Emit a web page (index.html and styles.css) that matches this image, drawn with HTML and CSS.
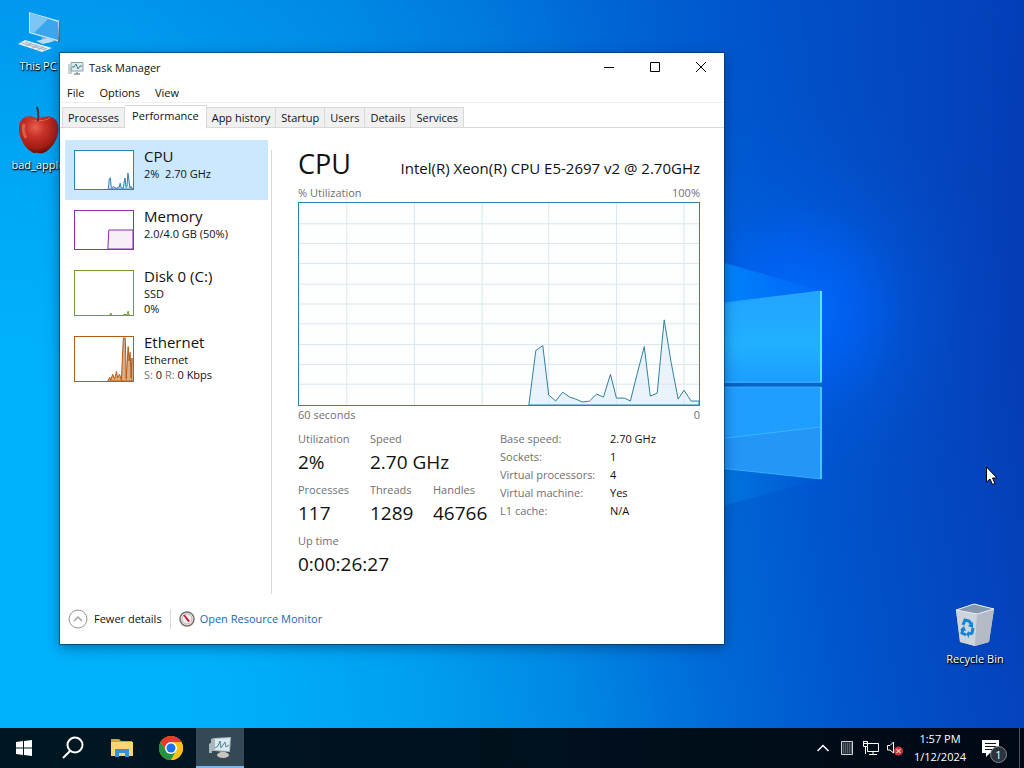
FILE: index.html
```html
<!DOCTYPE html>
<html lang="en">
<head>
<meta charset="utf-8">
<title>Task Manager</title>
<link rel="stylesheet" href="styles.css">
</head>
<body>
<div class="screen">
<main class="desktop">
  <svg class="wallpaper-logo" viewBox="0 0 300 300" aria-hidden="true">
    <defs>
      <linearGradient id="pane" x1="0" y1="0" x2="0" y2="1"><stop offset="0" stop-color="#22a4ff"/><stop offset=".6" stop-color="#20b0ff"/><stop offset="1" stop-color="#1c9cff"/></linearGradient>
      <linearGradient id="ray" x1="0" y1="0" x2="1" y2="0"><stop offset="0" stop-color="#0098ff" stop-opacity=".9"/><stop offset="1" stop-color="#0070ff" stop-opacity=".3"/></linearGradient>
      <linearGradient id="dim" x1="0" y1="0" x2="1" y2="0"><stop offset="0" stop-color="#0088e8" stop-opacity=".7"/><stop offset="1" stop-color="#0068e0" stop-opacity=".1"/></linearGradient>
    </defs>
    <path d="M0 16L122 51L0 68z" fill="url(#ray)"/>
    <path d="M0 226L122 239L0 272z" fill="url(#dim)"/>
    <path d="M0 67L122 51V143H0z" fill="url(#pane)"/>
    <path d="M0 147H122V239L0 226z" fill="#209eff"/>
    <path d="M0 201L122 187V239L0 226z" fill="#2396f7"/>
    <path d="M0 143H122V147H0z" fill="#0764c8"/>
    <path d="M0 66L121 51M0 142H121M0 147H121M0 226L121 239M0 201L121 187" fill="none" stroke="#4ac4ff" stroke-opacity=".6"/>
    <path d="M121 51V142" stroke="#55e5ff" stroke-width="2"/>
    <path d="M121 147V239" stroke="#49c5ff" stroke-width="2"/>
  </svg>

  <button class="shortcut shortcut-pc">
    <svg width="48" height="48" viewBox="0 0 48 48" aria-hidden="true">
      <path d="M15 3L46 12V33L15 24z" fill="#c8e8fa"/><path d="M16 4L44 13V31L16 23z" fill="#3ba6ed"/><path d="M16 4L34 10L20 24L16 23z" fill="#7cc6f5"/><path d="M45 12L46 12V33L44 33z" fill="#4c6c80"/>
      <path d="M28 28L36 30V34L28 32z" fill="#8fb2c6"/><path d="M22 32L34 29L41 32L29 35z" fill="#b9dcec"/>
      <path d="M4 35L11 31L38 39L28 43z" fill="#e6eef3"/><path d="M8 34L31 41M11 33L33 40M11 38L18 34M17 40L24 36M23 41L30 38" stroke="#9db2c0"/>
    </svg>
    <span>This PC</span>
  </button>
  <button class="shortcut shortcut-apple">
    <svg width="48" height="52" viewBox="0 0 48 52" aria-hidden="true">
      <defs><radialGradient id="apple" cx=".42" cy=".3" r=".7"><stop offset="0" stop-color="#e86050"/><stop offset=".35" stop-color="#c93228"/><stop offset=".8" stop-color="#a31c15"/><stop offset="1" stop-color="#650c08"/></radialGradient></defs>
      <path d="M24 15C17 10 6 11 5 23C4 34 12 45 18 48C20 50 22 48 24 49C27 50 30 49 33 47C40 42 46 31 44 21C42 11 31 11 24 15z" fill="url(#apple)"/>
      <path d="M10 13Q24 20 38 13Q26 21 10 13z" fill="#e98a68"/>
      <path d="M24 17Q25 9 23 3" fill="none" stroke="#503526" stroke-width="2"/>
      <path d="M10 20Q8 27 12 34" fill="none" stroke="#f0907c" stroke-opacity=".5" stroke-width="3"/>
    </svg>
    <span>bad_apple</span>
  </button>
  <button class="shortcut shortcut-bin">
    <svg width="48" height="48" viewBox="0 0 48 48" aria-hidden="true">
      <path d="M5 8L23 2L43 7L38 40L24 44L9 40z" fill="#c1cad3"/>
      <path d="M5 8L23 2L43 7L26 12z" fill="#8599ae"/>
      <path d="M5 8L26 12L24 44L9 40z" fill="#cdd4db"/><path d="M26 12L43 7L38 40L24 44z" fill="#b4bbc6"/>
      <path d="M5 8L26 12L43 7M5 8L23 2L43 7" fill="none" stroke="#e4ecf2"/>
      <path d="M12 23L14 18L18 19L20 22M22 26L21 31L18 32M15 33L11 31L12 27" fill="none" stroke="#1583d5" stroke-width="3"/>
      <path d="M17 24L22 20V26zM18 29L15 32L18 36zM9 28L13 24L15 29z" fill="#1583d5"/>
    </svg>
    <span>Recycle Bin</span>
  </button>

  <section class="window" aria-label="Task Manager">
    <header class="titlebar">
      <svg width="16" height="16" viewBox="0 0 16 16" aria-hidden="true"><path d="M3 2.500H15V11H3z" fill="#dcebed" stroke="#8aa2a6"/><path d="M4 7H6L8 4L10 9L12 6H14" fill="none" stroke="#427c83"/><path d="M1 4V14M3 7V14" stroke="#97a5a8"/><path d="M9 12V14M6 14H12" stroke="#8b999c" stroke-width="1.500"/></svg>
      <h1 class="title">Task Manager</h1>
      <div class="caption-buttons">
        <button aria-label="Minimize"><svg width="12" height="12" viewBox="0 0 12 12"><path d="M1 5.500H11"/></svg></button>
        <button aria-label="Maximize"><svg width="12" height="12" viewBox="0 0 12 12"><path d="M1.500 .5H10.500V9.500H1.500z"/></svg></button>
        <button aria-label="Close"><svg width="12" height="12" viewBox="0 0 12 12"><path d="M1 0L11 10M11 0L1 10"/></svg></button>
      </div>
    </header>
    <nav class="menubar" aria-label="Menu"><button>File</button><button>Options</button><button>View</button></nav>
    <div class="tabs" role="tablist">
      <button role="tab">Processes</button><button role="tab" class="selected" aria-selected="true">Performance</button><button role="tab">App history</button><button role="tab">Startup</button><button role="tab">Users</button><button role="tab">Details</button><button role="tab">Services</button>
    </div>
    <div class="content">
      <div class="resources">
        <button class="resource active">
          <svg class="thumb cpu" viewBox="0 0 402 204" preserveAspectRatio="none"><path d="M231 203L238 149L245 144L251 194L258 200L265 191L285 201L299 193L306 196L313 173L319 197L333 200L347 145L353 195L360 192L367 118L381 198L387 189L394 200L402 200V204H231z"/></svg>
          <span class="resource-text"><strong>CPU</strong><span>2%&nbsp; 2.70 GHz</span></span>
        </button>
        <button class="resource">
          <svg class="thumb memory" viewBox="0 0 60 40" preserveAspectRatio="none"><path d="M34 40L35 20H60V40z"/></svg>
          <span class="resource-text"><strong>Memory</strong><span>2.0/4.0 GB (50%)</span></span>
        </button>
        <button class="resource">
          <svg class="thumb disk tall" viewBox="0 0 60 46" preserveAspectRatio="none"><path d="M36 46L37 44L38 46zM50 46L52 45L53 46L54 45L55 42L56 46z"/></svg>
          <span class="resource-text"><strong>Disk 0 (C:)</strong><span>SSD</span><span>0%</span></span>
        </button>
        <button class="resource">
          <svg class="thumb ethernet tall" viewBox="0 0 60 46" preserveAspectRatio="none"><path d="M34 46L36 42L37 45L39 39L41 44L43 36L44 43L46 39L48 45L50 1H52L53 44L55 10L56 25L57 16L58 43L59 22V46z"/></svg>
          <span class="resource-text"><strong>Ethernet</strong><span>Ethernet</span><span><em>S:</em> 0 <em>R:</em> 0 Kbps</span></span>
        </button>
      </div>
      <section class="details">
        <header class="details-head"><h2>CPU</h2><p>Intel(R) Xeon(R) CPU E5-2697 v2 @ 2.70GHz</p></header>
        <div class="axis"><span>% Utilization</span><span>100%</span></div>
        <svg class="chart" viewBox="0 0 402 204" preserveAspectRatio="none" role="img" aria-label="CPU utilization over 60 seconds">
          <path class="grid" d="M48 0V204M116 0V204M184 0V204M251 0V204M319 0V204M387 0V204M0 21H402M0 41H402M0 61H402M0 82H402M0 102H402M0 122H402M0 143H402M0 163H402M0 183H402"/>
          <path class="usage" d="M231 204L238 149L245 144L251 194L258 200L265 191L272 196L278 198L285 201L292 200L299 193L306 196L313 173L319 197L327 197L333 200L340 172L347 145L353 195L360 192L367 118L374 161L381 198L387 189L394 200L402 200V204z"/>
        </svg>
        <div class="axis"><span>60 seconds</span><span>0</span></div>
        <div class="stats">
          <dl class="figures">
            <div><dt>Utilization</dt><dd>2%</dd></div>
            <div class="wide"><dt>Speed</dt><dd>2.70 GHz</dd></div>
            <div><dt>Processes</dt><dd>117</dd></div>
            <div><dt>Threads</dt><dd>1289</dd></div>
            <div><dt>Handles</dt><dd>46766</dd></div>
            <div class="full"><dt>Up time</dt><dd>0:00:26:27</dd></div>
          </dl>
          <dl class="facts">
            <dt>Base speed:</dt><dd>2.70 GHz</dd>
            <dt>Sockets:</dt><dd>1</dd>
            <dt>Virtual processors:</dt><dd>4</dd>
            <dt>Virtual machine:</dt><dd>Yes</dd>
            <dt>L1 cache:</dt><dd>N/A</dd>
          </dl>
        </div>
      </section>
    </div>
    <footer class="statusbar">
      <button><svg width="20" height="20" viewBox="0 0 20 20" aria-hidden="true"><circle cx="10" cy="10" r="9" fill="none" stroke="#939393"/><path d="M6 12L10 8L14 12" fill="none" stroke="#a0a0a0" stroke-width="1.500"/></svg>Fewer details</button>
      <a href="#resource-monitor"><svg width="16" height="16" viewBox="0 0 16 16" aria-hidden="true"><circle cx="8" cy="8" r="7" fill="#f1f0ee" stroke="#77706c" stroke-width="1.500"/><circle cx="8" cy="8" r="5" fill="none" stroke="#b4b4b4"/><path d="M4 4L6 4L11 10L9 11z" fill="#c9192f"/></svg>Open Resource Monitor</a>
    </footer>
  </section>

  <svg class="cursor" width="12" height="20" viewBox="0 0 12 20" aria-hidden="true"><path d="M.5 1V16L4 13L6.500 18.500L9 17.500L6.500 12H11z" fill="#fff" stroke="#000"/></svg>
</main>

<footer class="taskbar">
  <div class="apps">
    <button aria-label="Start"><svg width="16" height="16" viewBox="0 0 16 16"><path d="M0 2L7 1V7.500H0zM8 1L16 0V7.500H8zM0 8.500H7V15L0 14zM8 8.500H16V16L8 15z" fill="#fff"/></svg></button>
    <button aria-label="Search"><svg width="24" height="24" viewBox="0 0 24 24"><circle cx="14" cy="9" r="7.500" fill="none" stroke="#fff" stroke-width="2"/><path d="M9 15L2 22" stroke="#fff" stroke-width="2"/></svg></button>
    <button aria-label="File Explorer"><svg width="22" height="20" viewBox="0 0 22 20"><path d="M0 1H8L10 3H21V7H0z" fill="#d9a129"/><path d="M0 4H22V18H0z" fill="#fbd673"/><path d="M4 11H18V19H14V15H8V19H4z" fill="#3b91d0"/></svg></button>
    <button aria-label="Chrome"><svg width="24" height="24" viewBox="0 0 24 24"><circle cx="12" cy="12" r="12" fill="#fbc116"/><path d="M1.600 6A12 12 0 0 1 22.400 6H12L6.800 15z" fill="#e33b2e"/><path d="M1.600 6A12 12 0 0 0 12 24L17.200 15L6.800 15z" fill="#229342"/><path d="M22.400 6A12 12 0 0 1 12 24L17.200 15L12 6z" fill="#fbc116"/><circle cx="12" cy="12" r="6" fill="#fff"/><circle cx="12" cy="12" r="4.500" fill="#1a73e8"/></svg></button>
    <button class="running" aria-label="Task Manager"><svg width="24" height="24" viewBox="0 0 24 24"><path d="M1 9L4 7V18L1 18zM3 4L6 3V16L3 16zM6 3L23 2L22 17L6 16z" fill="#aab7bd"/><path d="M7 4L22 3L21 16L7 15z" fill="#dce9ee"/><path d="M7 13L10 11L12 6L13 13L15 10L17 7L18 12L21 10" fill="none" stroke="#4e8294"/><path d="M12 16H18V19H12z" fill="#8f9999"/><ellipse cx="15" cy="20" rx="6" ry="3" fill="#c9c6c1"/></svg></button>
  </div>
  <div class="tray">
    <button aria-label="Show hidden icons"><svg width="14" height="14" viewBox="0 0 14 14"><path d="M1.500 10L7 4.500L12.500 10" fill="none" stroke="#fff" stroke-width="1.500"/></svg></button>
    <button aria-label="Touch keyboard"><svg width="14" height="14" viewBox="0 0 14 14"><path d="M1.500 .5H12.500V13.500H1.500z" fill="#272f38" stroke="#d1d5d8"/><path d="M3 3H12M3 5H12M3 7H12M3 9H12M3 11H12" stroke="#89919a" stroke-dasharray="1 1"/></svg></button>
    <button aria-label="Network"><svg width="18" height="16" viewBox="0 0 18 16"><path d="M6 3.500H16.500V11.500H5.500V7M11 12V14.500M7 14.500H15M3.500 7V14M1 1.500H5.500V6.500H1.500V1.500M2 3.500H5" fill="none" stroke="#fff"/></svg></button>
    <button aria-label="Volume muted"><svg width="18" height="16" viewBox="0 0 18 16"><path d="M1.500 5.500H4L7.500 2V13L4 10H1.500z" fill="none" stroke="#fff"/><circle cx="12.500" cy="11" r="4.500" fill="#d1343c"/><path d="M10.500 9L14.500 13M14.500 9L10.500 13" stroke="#fff"/></svg></button>
    <button class="clock"><time>1:57 PM</time><time>1/12/2024</time></button>
    <button class="notifications" aria-label="Notifications"><svg width="18" height="17" viewBox="0 0 18 17"><path d="M0 0H17V13H8L4 17V13H0z" fill="#fff"/><path d="M3 3.500H14M3 6.500H14M3 9.500H10" stroke="#0a1420"/></svg><span class="badge">1</span></button>
    <button class="show-desktop" aria-label="Show desktop"></button>
  </div>
</footer>
</div>
</body>
</html>
```

FILE: styles.css
```css
* { box-sizing: border-box; }
body { margin: 0; font: 11px/18px "Open Sans", "Noto Sans", sans-serif; color: #111; }
button { margin: 0; padding: 0; border: 0; background: none; font: inherit; color: inherit; }
h1, h2, p, dl, dd { margin: 0; font-weight: 400; }
svg { display: block; flex: none; }

.screen { display: flex; flex-direction: column; height: 100vh; overflow: hidden; }
.desktop {
  position: relative;
  flex: 1;
  overflow: hidden;
  background:
    radial-gradient(circle at 800px 310px, rgba(0, 108, 255, .9) 0, rgba(0, 102, 255, .65) 55px, rgba(0, 96, 240, .25) 110px, rgba(0, 92, 235, .08) 160px, transparent 210px),
    linear-gradient(180deg, rgba(0, 80, 200, .26) 0, rgba(0, 80, 200, .1) 25%, transparent 50%),
    linear-gradient(82deg, #00b2fc 0, #00b0fa 20%, #009ef0 38%, #0088e4 51%, #006cd8 63%, #0056ce 75%, #0446be 88%, #0438b2 100%);
}
.wallpaper-logo { position: absolute; left: 700px; top: 240px; width: 300px; height: 300px; }

.shortcut {
  position: absolute;
  display: flex;
  flex-direction: column;
  align-items: center;
  width: 76px;
  color: #fff;
  text-shadow: 0 1px 2px #000, 1px 1px 1px #000;
}
.shortcut-pc { left: 0; top: 9px; }
.shortcut-apple { left: 0; top: 104px; }
.shortcut-bin { right: 11px; top: 602px; }

.window {
  position: absolute;
  inset: 53px 300px 84px 60px;
  display: flex;
  flex-direction: column;
  background: #fff;
  box-shadow: 0 0 0 1px rgba(0, 50, 90, .6), 0 3px 12px rgba(0, 30, 70, .5);
}
.titlebar { display: flex; align-items: center; gap: 5px; height: 30px; padding-left: 8px; }
.title { flex: 1; font-size: 11px; }
.caption-buttons { display: flex; align-self: stretch; }
.caption-buttons button { display: grid; place-items: center; width: 46px; }
.caption-buttons path { fill: none; stroke: #000; }
.menubar { display: flex; gap: 15px; height: 20px; padding: 1px 7px 0; border-bottom: 1px solid #f0f0f0; }
.tabs { display: flex; align-items: flex-end; height: 25px; padding-left: 2px; border-bottom: 1px solid #d9d9d9; }
.tabs button { height: 20px; padding: 0 5px; border: 1px solid #d9d9d9; border-width: 1px 1px 0 0; background: #f0f0f0; }
.tabs button:first-child { border-left-width: 1px; }
.tabs .selected { height: 23px; margin-bottom: -1px; padding: 0 7px 3px; background: #fff; }

.content { display: flex; flex: 1; padding-top: 12px; }
.resources { width: 211px; padding-left: 5px; }
.resource { display: flex; align-items: flex-start; gap: 10px; width: 203px; padding: 10px 9px; text-align: left; }
.active { background: #cce8ff; }
.resource-text { display: flex; flex-direction: column; margin-top: -4px; line-height: 15px; white-space: nowrap; }
.resource-text strong { font-size: 15px; font-weight: 400; line-height: 20px; }
.resource-text em { color: #777; font-style: normal; }
.thumb { width: 60px; height: 40px; border: 1px solid; background: #fff; }
.tall { height: 46px; }
.thumb path { stroke: currentColor; fill: currentColor; fill-opacity: .15; vector-effect: non-scaling-stroke; }
.cpu { color: #2d83b3; }
.memory { color: #8930a5; }
.memory path { fill-opacity: .08; }
.disk { color: #6f9f32; }
.ethernet { color: #b35c14; }
.ethernet path { fill-opacity: .5; }

.details { flex: 1; margin-top: 10px; padding: 0 24px 0 26px; border-left: 1px solid #d9d9d9; }
.details-head { display: flex; justify-content: space-between; align-items: baseline; height: 34px; line-height: 28px; white-space: nowrap; }
.details-head h2 { font-size: 27px; }
.details-head p { font-size: 15px; }
.axis { display: flex; justify-content: space-between; color: #707070; }
.chart { width: 100%; height: 204px; border: 1px solid #3081a7; background: #fdffff; }
.grid { fill: none; stroke: #d9e6ec; vector-effect: non-scaling-stroke; }
.usage { fill: #d5e8f5; fill-opacity: .5; stroke: #347f9f; vector-effect: non-scaling-stroke; }
.stats { display: flex; padding-top: 6px; }
.stats dt { color: #707070; white-space: nowrap; }
.figures { display: grid; grid-template-columns: 72px 63px 67px; row-gap: 5px; align-content: start; }
.figures dd { font-size: 19px; line-height: 28px; }
.wide { grid-column: span 2; }
.full { grid-column: span 3; }
.facts { display: grid; grid-template-columns: 110px auto; align-content: start; }

.statusbar { display: flex; align-items: center; height: 50px; padding-left: 8px; }
.statusbar button { display: flex; align-items: center; gap: 6px; padding-right: 8px; border-right: 1px solid #d9d9d9; }
.statusbar a { display: flex; align-items: center; gap: 5px; padding-left: 8px; color: #1a66b3; text-decoration: none; }
.cursor { position: absolute; left: 986px; top: 466px; }

.taskbar { display: flex; justify-content: space-between; height: 40px; background: linear-gradient(90deg, #001722, #00101c 55%, #000916); color: #fff; }
.apps { display: flex; gap: 1px; }
.apps button { display: grid; place-items: center; width: 48px; }
.apps .running { background: #344954; border-bottom: 2px solid #76b9ed; }
.tray { display: flex; align-items: stretch; }
.tray button { display: grid; place-items: center; width: 24px; }
.tray .clock { align-content: center; width: 66px; }
.tray .notifications { position: relative; width: 46px; padding-right: 10px; }
.badge { position: absolute; left: 17px; top: 18px; width: 17px; height: 17px; border: 1px solid #7f8790; border-radius: 50%; background: #2b333c; line-height: 15px; text-align: center; }
.tray .show-desktop { width: 5px; border-left: 1px solid #4b535c; }
```
